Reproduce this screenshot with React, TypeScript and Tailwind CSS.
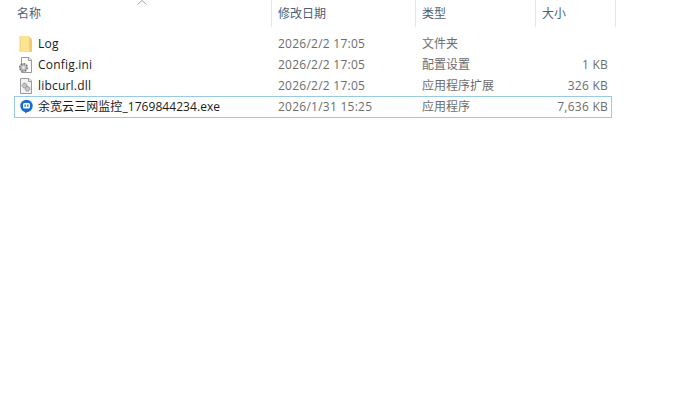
function FolderIcon() {
  return (
    <svg width="16" height="16" viewBox="0 0 16 16" className="shrink-0">
      <path d="M2 0h9l3 3v13H2z" fill="#fbe391" />
      <path d="M11 1l3 3v12h-2.5L11 10z" fill="#efcd6c" />
      <path d="M2 0v16" stroke="#e9cd76" strokeWidth="0.8" />
    </svg>
  );
}

function IniIcon() {
  return (
    <svg width="16" height="16" viewBox="0 0 16 16" className="shrink-0">
      <path d="M3.5 0.5h7.5l2.5 2.5v12.5h-10z" fill="#fbfbfb" stroke="#9a9a9a" />
      <path d="M10.5 0.5v3h3" fill="#e8e8e8" stroke="#9a9a9a" />
      <circle cx="5.5" cy="10.5" r="3.8" fill="#b9bcbe" stroke="#777" strokeWidth="1.6" strokeDasharray="1.8 1.1" />
      <circle cx="5.5" cy="10.5" r="1.3" fill="#f4f4f4" />
    </svg>
  );
}

function DllIcon() {
  return (
    <svg width="16" height="16" viewBox="0 0 16 16" className="shrink-0">
      <path d="M2.5 0.5h8.5l2.5 2.5v12.5h-11z" fill="#f3f3f3" stroke="#9a9a9a" />
      <path d="M10.5 0.5v3h3" fill="#e8e8e8" stroke="#9a9a9a" />
      <circle cx="6.5" cy="7.5" r="2.4" fill="#bfc4c8" stroke="#84888b" strokeDasharray="1.3 0.7" />
      <circle cx="9.5" cy="10.8" r="2.4" fill="#bfc4c8" stroke="#84888b" strokeDasharray="1.3 0.7" />
    </svg>
  );
}

function ExeIcon() {
  return (
    <svg width="16" height="16" viewBox="0 0 16 16" className="shrink-0">
      <circle cx="8.5" cy="7" r="6.2" fill="#176cc9" />
      <path d="M6.5 12l1 2.5 2-2z" fill="#176cc9" />
      <rect x="5" y="4" width="7" height="5.5" rx="1.6" fill="#fff" />
      <rect x="6.5" y="5.6" width="1.3" height="2.2" fill="#176cc9" />
      <rect x="9.2" y="5.6" width="1.3" height="2.2" fill="#176cc9" />
    </svg>
  );
}

const rows = [
  { name: 'Log', track: 'tracking-[0.2px]', date: '2026/2/2 17:05', type: '文件夹', size: '', icon: <FolderIcon /> },
  { name: 'Config.ini', track: 'tracking-[0.2px]', date: '2026/2/2 17:05', type: '配置设置', size: '1 KB', icon: <IniIcon /> },
  { name: 'libcurl.dll', track: 'tracking-[0.2px]', date: '2026/2/2 17:05', type: '应用程序扩展', size: '326 KB', icon: <DllIcon /> },
  { name: '余宽云三网监控_1769844234.exe', track: 'tracking-[0.06px]', date: '2026/1/31 15:25', type: '应用程序', size: '7,636 KB', icon: <ExeIcon />, selected: true },
];

export default function App() {
  return (
    <div className="relative w-[686px] h-[418px] bg-white overflow-hidden text-[12px] font-['Open_Sans','Noto_Sans_CJK_SC',sans-serif]">
      <svg width="10" height="5" viewBox="0 0 10 5" className="absolute left-[137px] top-0">
        <path d="M0.5 4.5L5 0.5l4.5 4" fill="none" stroke="#9aa0a6" />
      </svg>
      <div className="flex h-[27px] pl-[14px] text-[#4c607a]">
        <div className="w-[258px] pl-[3px] pt-[5px] border-r border-[#e5e5e5]">名称</div>
        <div className="w-[144px] pl-[6px] pt-[5px] border-r border-[#e5e5e5]">修改日期</div>
        <div className="w-[120px] pl-[6px] pt-[5px] border-r border-[#e5e5e5]">类型</div>
        <div className="w-[80px] pl-[6px] pt-[5px] border-r border-[#e5e5e5]">大小</div>
      </div>
      <div className="flex flex-col w-[598px] ml-[14px] mt-[6px]">
        {rows.map((r) => (
          <div
            key={r.name}
            className={
              r.selected
                ? 'flex items-center h-[22px] border border-[#99c9e5] text-[#6d6d6d]'
                : 'flex items-center h-[21px] border border-transparent text-[#6d6d6d]'
            }
          >
            <div className="flex items-center w-[263px] pl-[3px] gap-[4px] text-[#1b1b1b]">
              {r.icon}
              <span className={`whitespace-nowrap ${r.track}`}>{r.name}</span>
            </div>
            <div className="w-[144px] tracking-[0.25px]">{r.date}</div>
            <div className="w-[112px] whitespace-nowrap">{r.type}</div>
            <div className="flex-1 text-right pr-[3px] tracking-[0.25px]">{r.size}</div>
          </div>
        ))}
      </div>
    </div>
  );
}
